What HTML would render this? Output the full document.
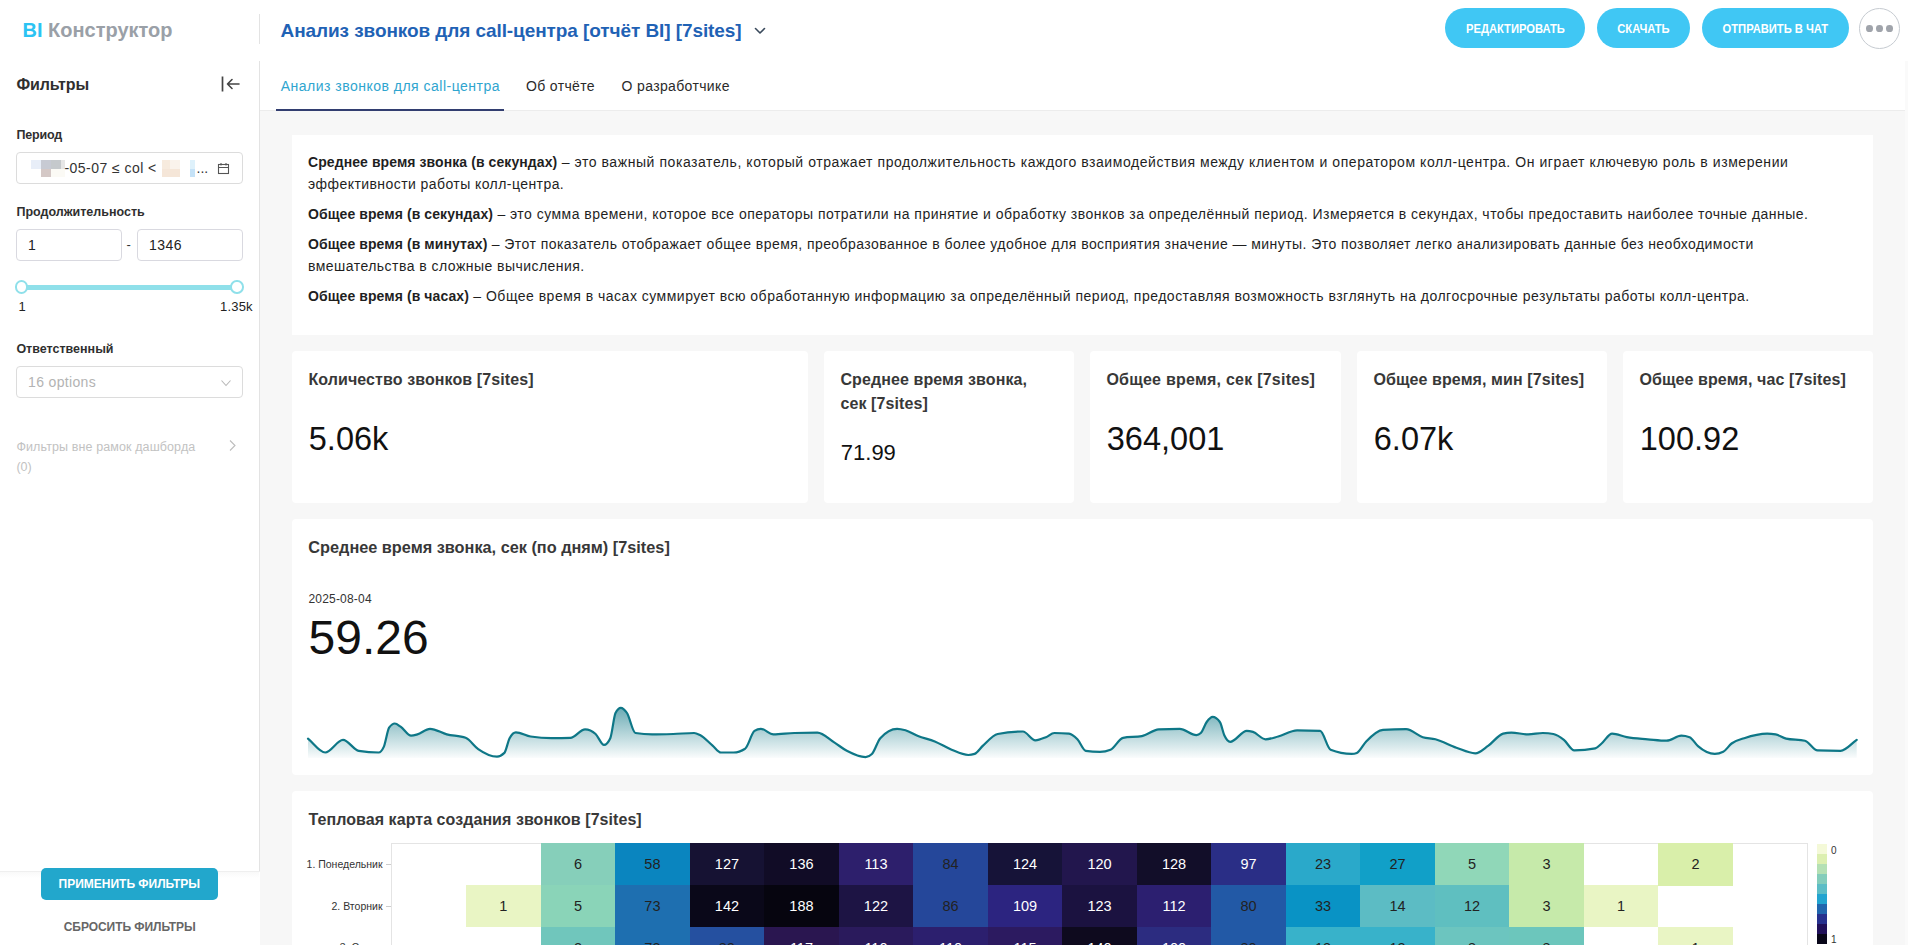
<!DOCTYPE html><html><head><meta charset="utf-8"><style>
*{box-sizing:border-box;margin:0;padding:0}
html,body{width:1908px;height:945px;overflow:hidden;background:#f7f7f7;font-family:"Liberation Sans",sans-serif;color:#222}
.abs{position:absolute}
.t{position:absolute;white-space:nowrap;line-height:1}
#hdr{position:absolute;left:0;top:0;width:1908px;height:61px;background:#fff}
#side{position:absolute;left:0;top:61px;width:260px;height:884px;background:#fff}
#tabs{position:absolute;left:260px;top:61px;width:1645px;height:50px;background:#fff;border-bottom:1px solid #ececec}
.card{position:absolute;background:#fff;border-radius:4px}
.btn{position:absolute;top:8px;height:40px;border-radius:20px;background:#40c7f4;color:#fff;font-weight:bold;font-size:12px;line-height:41.5px;text-align:center;letter-spacing:-0.6px}
.lbl{position:absolute;left:16px;font-size:12.5px;font-weight:bold;color:#303030;white-space:nowrap;line-height:1}
.inp{position:absolute;border:1px solid #d9d9e0;border-radius:4px;background:#fff}
.desc{position:absolute;left:308px;white-space:nowrap;font-size:14px;color:#1f1f1f;letter-spacing:0.52px;line-height:1}
.desc b{letter-spacing:0.08px}
.kt{position:absolute;font-size:16px;font-weight:bold;color:#383838;white-space:nowrap;line-height:1;letter-spacing:0.1px}
.kv{position:absolute;color:#111;white-space:nowrap;line-height:1}
.cell{position:absolute;width:75px;height:42px;line-height:42px;text-align:center;font-size:14.5px;color:#222;padding-top:1px}
.cell.w{color:#fff}
</style></head><body>
<div id="hdr">
<div class="t" style="left:22.5px;top:20.1px;font-size:20px;font-weight:bold;letter-spacing:0px"><span style="color:#2bc3f3">BI</span><span style="color:#9aa0a7"> Конструктор</span></div>
<div class="abs" style="left:259px;top:14px;width:1px;height:30px;background:#e3e3e3"></div>
<div class="t" style="left:280.5px;top:20.6px;font-size:19px;font-weight:bold;color:#1f62b5;letter-spacing:-0.08px">Анализ звонков для call-центра [отчёт BI] [7sites]</div>
<svg class="abs" style="left:753px;top:25.5px" width="14" height="10" viewBox="0 0 14 10"><path d="M2.5,2.5 L7,7 L11.5,2.5" fill="none" stroke="#3a4a5c" stroke-width="1.6" stroke-linecap="round" stroke-linejoin="round"/></svg>
<div class="btn" style="left:1445px;width:140px"><span style="display:inline-block;transform:scaleX(0.86);font-size:13px;letter-spacing:0">РЕДАКТИРОВАТЬ</span></div>
<div class="btn" style="left:1597px;width:93px"><span style="display:inline-block;transform:scaleX(0.86);font-size:13px;letter-spacing:0">СКАЧАТЬ</span></div>
<div class="btn" style="left:1702px;width:147px"><span style="display:inline-block;transform:scaleX(0.86);font-size:13px;letter-spacing:0">ОТПРАВИТЬ В ЧАТ</span></div>
<div class="abs" style="left:1859px;top:8px;width:41px;height:41px;border-radius:50%;border:1.2px solid #c6cbd1;background:#fff"></div>
<div class="abs" style="left:1866.15px;top:25.05px;width:6.7px;height:6.7px;border-radius:50%;background:#a0a4ab"></div>
<div class="abs" style="left:1876.15px;top:25.05px;width:6.7px;height:6.7px;border-radius:50%;background:#a0a4ab"></div>
<div class="abs" style="left:1886.15px;top:25.05px;width:6.7px;height:6.7px;border-radius:50%;background:#a0a4ab"></div>
</div>
<div id="side"></div>
<div class="abs" style="left:259px;top:61px;width:1px;height:811px;background:#e3e3e3"></div>
<div class="abs" style="left:0;top:871px;width:260px;height:1px;background:#efefef"></div>
<div class="abs" style="left:0;top:872px;width:259px;height:6px;background:linear-gradient(#f9f9f9,#fff)"></div>
<div class="t" style="left:16.4px;top:76.9px;font-size:16px;font-weight:bold;color:#2f2f2f;letter-spacing:-0.1px">Фильтры</div>
<svg class="abs" style="left:218px;top:74px" width="24" height="20" viewBox="0 0 24 20"><path d="M4.5,2.5 V17.5" stroke="#444" stroke-width="1.7" fill="none"/><path d="M21,10 H9.5 M14,5.5 L9.5,10 L14,14.5" stroke="#444" stroke-width="1.6" fill="none" stroke-linecap="round" stroke-linejoin="round"/></svg>
<div class="t" style="left:16.4px;top:129.4px;font-size:12.5px;font-weight:bold;color:#2f2f2f;letter-spacing:-0.15px">Период</div>
<div class="inp" style="left:16px;top:152px;width:227px;height:32px;border-color:#dcdcdc"></div>
<div class="abs" style="left:30.5px;top:160px;width:10px;height:9px;background:#e8eef8"></div>
<div class="abs" style="left:40.5px;top:160px;width:10px;height:9px;background:#c7cad3"></div>
<div class="abs" style="left:50.5px;top:160px;width:10px;height:9px;background:#c5c9cc"></div>
<div class="abs" style="left:60.5px;top:160px;width:4px;height:9px;background:#e6e6e6"></div>
<div class="abs" style="left:40.5px;top:169px;width:10px;height:8px;background:#d4c8c6"></div>
<div class="abs" style="left:50.5px;top:169px;width:14px;height:8px;background:#fbfaf5"></div>
<div class="abs" style="left:162px;top:160px;width:8px;height:9px;background:#f7ebde"></div>
<div class="abs" style="left:170px;top:160px;width:10px;height:9px;background:#faf3ec"></div>
<div class="abs" style="left:162px;top:169px;width:18px;height:8px;background:#f5e6d8"></div>
<div class="abs" style="left:190px;top:160px;width:5px;height:9px;background:#def1fb"></div>
<div class="abs" style="left:190px;top:169px;width:5px;height:8px;background:#c5e2f7"></div>
<div class="t" style="left:64.5px;top:161.4px;font-size:14px;color:#333;letter-spacing:0.45px">-05-07 ≤ col &lt;</div>
<div class="t" style="left:196.5px;top:161.4px;font-size:14px;color:#333">...</div>
<svg class="abs" style="left:216px;top:161px" width="15" height="15" viewBox="0 0 15 15"><rect x="2.5" y="3.5" width="10" height="9" fill="none" stroke="#555" stroke-width="1.1"/><path d="M2.5,6.5 H12.5 M5,2 V4.5 M10,2 V4.5" stroke="#555" stroke-width="1.1"/></svg>
<div class="t" style="left:16.4px;top:205.8px;font-size:12.5px;font-weight:bold;color:#2f2f2f">Продолжительность</div>
<div class="inp" style="left:16px;top:229px;width:106px;height:32px"></div>
<div class="inp" style="left:137px;top:229px;width:106px;height:32px"></div>
<div class="t" style="left:28px;top:238.0px;font-size:14px;color:#222">1</div>
<div class="t" style="left:126.5px;top:237.5px;font-size:13px;color:#333">-</div>
<div class="t" style="left:149px;top:238.0px;font-size:14px;color:#222;letter-spacing:0.5px">1346</div>
<div class="abs" style="left:22px;top:285px;width:215px;height:4.5px;background:#8fe0ea"></div>
<div class="abs" style="left:15.1px;top:280.3px;width:13.4px;height:13.4px;border-radius:50%;border:2.4px solid #8fe0ea;background:#fff"></div>
<div class="abs" style="left:230.4px;top:280.3px;width:13.4px;height:13.4px;border-radius:50%;border:2.4px solid #8fe0ea;background:#fff"></div>
<div class="t" style="left:18.5px;top:299.8px;font-size:13px;color:#222">1</div>
<div class="t" style="left:220px;top:299.8px;font-size:13px;color:#222;letter-spacing:0.2px">1.35k</div>
<div class="t" style="left:16.4px;top:342.7px;font-size:12.5px;font-weight:bold;color:#2f2f2f">Ответственный</div>
<div class="inp" style="left:16px;top:366px;width:227px;height:32px;border-color:#dcdcdc"></div>
<div class="t" style="left:28px;top:374.8px;font-size:14px;color:#b3b3b3;letter-spacing:0.35px">16 options</div>
<svg class="abs" style="left:219px;top:376px" width="14" height="14" viewBox="0 0 14 14"><path d="M2.5,4.5 L7,9.5 L11.5,4.5" fill="none" stroke="#b8b8b8" stroke-width="1.1"/></svg>
<div class="t" style="left:16.4px;top:440.6px;font-size:12.5px;color:#c2c2c2;letter-spacing:0.11px">Фильтры вне рамок дашборда</div>
<div class="t" style="left:16.4px;top:460.9px;font-size:12.5px;color:#c2c2c2">(0)</div>
<svg class="abs" style="left:226px;top:438px" width="14" height="14" viewBox="0 0 14 14"><path d="M4,2.5 L9,7.5 L4,12.5" fill="none" stroke="#bdbdbd" stroke-width="1.1"/></svg>
<div class="abs" style="left:41px;top:868px;width:177px;height:32px;border-radius:5px;background:#22a7cc"></div>
<div class="t" style="left:58.5px;top:878.0px;font-size:12px;font-weight:bold;color:#fff;letter-spacing:0.0px">ПРИМЕНИТЬ ФИЛЬТРЫ</div>
<div class="t" style="left:63.7px;top:920.8px;font-size:12px;font-weight:bold;color:#666;letter-spacing:-0.05px">СБРОСИТЬ ФИЛЬТРЫ</div>
<div id="tabs"></div>
<div class="t" style="left:280.7px;top:79.2px;font-size:14px;color:#2fa5cf;letter-spacing:0.49px">Анализ звонков для call-центра</div>
<div class="t" style="left:526px;top:79.2px;font-size:14px;color:#2a2a2a;letter-spacing:0.35px">Об отчёте</div>
<div class="t" style="left:621.5px;top:79.2px;font-size:14px;color:#2a2a2a;letter-spacing:0.36px">О разработчике</div>
<div class="abs" style="left:276px;top:109px;width:228px;height:2px;background:#323e70"></div>
<div class="card" style="left:292px;top:135px;width:1581px;height:200px;border-radius:0"></div>
<div class="desc" style="top:155.1px;letter-spacing:0.564px"><b>Среднее время звонка (в секундах)</b> – это важный показатель, который отражает продолжительность каждого взаимодействия между клиентом и оператором колл-центра. Он играет ключевую роль в измерении</div>
<div class="desc" style="top:177.1px;letter-spacing:0.429px">эффективности работы колл-центра.</div>
<div class="desc" style="top:206.6px;letter-spacing:0.474px"><b>Общее время (в секундах)</b> – это сумма времени, которое все операторы потратили на принятие и обработку звонков за определённый период. Измеряется в секундах, чтобы предоставить наиболее точные данные.</div>
<div class="desc" style="top:236.6px;letter-spacing:0.442px"><b>Общее время (в минутах)</b> – Этот показатель отображает общее время, преобразованное в более удобное для восприятия значение — минуты. Это позволяет легко анализировать данные без необходимости</div>
<div class="desc" style="top:258.6px;letter-spacing:0.463px">вмешательства в сложные вычисления.</div>
<div class="desc" style="top:288.6px;letter-spacing:0.493px"><b>Общее время (в часах)</b> – Общее время в часах суммирует всю обработанную информацию за определённый период, предоставляя возможность взглянуть на долгосрочные результаты работы колл-центра.</div>
<div class="card" style="left:292px;top:351px;width:516px;height:152.3px"></div>
<div class="kt" style="left:308.4px;top:371.5px">Количество звонков [7sites]</div>
<div class="kv" style="left:308.8px;top:422.5px;font-size:32.5px">5.06k</div>
<div class="card" style="left:824px;top:351px;width:250px;height:152.3px"></div>
<div class="kt" style="left:840.4px;top:371.5px">Среднее время звонка,</div>
<div class="kt" style="left:840.4px;top:396.2px">сек [7sites]</div>
<div class="kv" style="left:840.8px;top:441.6px;font-size:22px">71.99</div>
<div class="card" style="left:1090px;top:351px;width:251px;height:152.3px"></div>
<div class="kt" style="left:1106.4px;top:371.5px;letter-spacing:0.24px">Общее время, сек [7sites]</div>
<div class="kv" style="left:1106.8px;top:422.5px;font-size:32.5px">364,001</div>
<div class="card" style="left:1357px;top:351px;width:250px;height:152.3px"></div>
<div class="kt" style="left:1373.4px;top:371.5px">Общее время, мин [7sites]</div>
<div class="kv" style="left:1373.8px;top:422.5px;font-size:32.5px">6.07k</div>
<div class="card" style="left:1623px;top:351px;width:250px;height:152.3px"></div>
<div class="kt" style="left:1639.4px;top:371.5px">Общее время, час [7sites]</div>
<div class="kv" style="left:1639.8px;top:422.5px;font-size:32.5px">100.92</div>
<div class="card" style="left:292px;top:519px;width:1581px;height:256px"></div>
<div class="t" style="left:308.3px;top:539.2px;font-size:16.3px;font-weight:bold;color:#383838">Среднее время звонка, сек (по дням) [7sites]</div>
<div class="t" style="left:308.4px;top:592.8px;font-size:12px;color:#333;letter-spacing:0.2px">2025-08-04</div>
<div class="t" style="left:308.6px;top:614.1px;font-size:48px;color:#111">59.26</div>
<svg class="abs" style="left:0;top:0" width="1908" height="945" viewBox="0 0 1908 945"><defs><linearGradient id="g" x1="0" y1="705" x2="0" y2="758" gradientUnits="userSpaceOnUse"><stop offset="0" stop-color="#0f7786" stop-opacity="0.65"/><stop offset="1" stop-color="#0f7786" stop-opacity="0.02"/></linearGradient></defs><path d="M308.0,738.6 C313.7,743.2 319.5,752.5 325.2,752.5 C331.1,752.5 337.1,739.9 343.0,739.9 C348.2,739.9 353.5,749.9 358.7,750.8 C365.3,751.9 372.0,752.5 378.6,752.5 C380.4,752.5 382.1,750.5 383.9,746.6 C385.6,742.7 387.4,730.3 389.1,727.7 C391.0,724.9 392.9,723.5 394.8,723.5 C396.7,723.5 398.7,725.4 400.6,726.7 C404.1,729.0 407.6,735.7 411.1,735.7 C413.2,735.7 415.3,735.0 417.4,734.4 C421.6,733.2 425.8,728.8 430.0,728.8 C435.6,728.8 441.2,732.9 446.8,734.4 C453.1,736.0 459.3,735.5 465.6,737.8 C469.8,739.3 474.0,746.2 478.2,749.1 C484.5,753.5 490.7,756.7 497.0,756.7 C499.5,756.7 501.9,755.4 504.4,752.9 C506.1,751.1 507.9,741.4 509.6,738.2 C511.7,734.3 513.8,732.3 515.9,732.3 C520.8,732.3 525.7,735.7 530.6,736.5 C537.6,737.6 544.6,738.2 551.6,738.2 C557.9,738.2 564.1,738.1 570.4,737.8 C575.3,737.6 580.2,729.4 585.1,729.4 C588.6,729.4 592.1,730.9 595.6,734.0 C598.4,736.5 601.2,744.9 604.0,744.9 C606.1,744.9 608.2,742.7 610.3,738.2 C612.0,734.5 613.8,716.4 615.5,713.0 C617.3,709.5 619.0,707.8 620.8,707.8 C622.9,707.8 624.9,709.9 627.0,713.0 C629.8,717.2 632.6,732.5 635.4,733.0 C641.0,733.9 646.6,734.4 652.2,734.4 C659.2,734.4 666.2,734.2 673.2,734.0 C680.2,733.8 687.1,733.0 694.1,733.0 C696.1,733.0 698.0,734.1 700.0,735.1 C704.2,737.2 708.4,742.1 712.6,745.6 C715.4,747.9 718.2,752.5 721.0,752.5 C725.2,752.5 729.3,752.5 733.5,752.5 C737.4,752.5 741.2,751.2 745.1,748.7 C748.2,746.6 751.4,733.0 754.5,730.9 C756.6,729.5 758.7,728.8 760.8,728.8 C765.0,728.8 769.2,734.4 773.4,734.4 C780.4,734.4 787.3,733.2 794.3,733.0 C802.0,732.7 809.7,732.6 817.4,732.6 C823.0,732.6 828.6,738.9 834.2,742.4 C838.4,745.0 842.6,748.6 846.8,750.8 C853.1,754.1 859.3,757.1 865.6,757.1 C867.7,757.1 869.8,756.1 871.9,754.0 C874.7,751.2 877.5,741.3 880.3,738.2 C885.9,731.9 891.5,728.8 897.1,728.8 C899.9,728.8 902.7,729.5 905.5,730.3 C909.7,731.5 913.8,734.4 918.0,736.1 C923.6,738.3 929.2,739.1 934.8,741.4 C940.4,743.7 946.0,747.4 951.6,749.7 C957.2,752.0 962.7,755.0 968.3,755.0 C970.4,755.0 972.5,754.6 974.6,753.9 C977.4,752.9 980.2,748.2 983.0,745.6 C987.9,741.1 992.8,735.0 997.7,734.0 C1006.1,732.3 1014.5,731.5 1022.9,731.5 C1027.1,731.5 1031.2,740.3 1035.4,740.3 C1038.9,740.3 1042.4,738.6 1045.9,737.2 C1048.7,736.1 1051.5,733.0 1054.3,733.0 C1059.2,733.0 1064.1,733.2 1069.0,733.6 C1071.8,733.8 1074.6,736.4 1077.4,739.3 C1080.2,742.2 1082.9,750.4 1085.7,750.8 C1090.5,751.5 1095.2,751.8 1100.0,751.8 C1103.5,751.8 1107.0,751.1 1110.5,749.7 C1114.7,748.0 1118.9,738.6 1123.1,737.8 C1129.4,736.7 1135.6,737.2 1141.9,736.1 C1147.5,735.1 1153.1,729.7 1158.7,729.4 C1165.7,729.0 1172.7,728.8 1179.7,728.8 C1185.3,728.8 1190.8,735.1 1196.4,735.1 C1197.9,735.1 1199.3,734.4 1200.8,733.0 C1202.8,731.1 1204.7,724.7 1206.7,722.0 C1208.7,719.3 1210.6,716.9 1212.6,716.9 C1215.0,716.9 1217.5,718.6 1219.9,722.0 C1221.4,724.0 1222.8,732.0 1224.3,735.2 C1226.3,739.5 1228.2,741.8 1230.2,741.8 C1235.7,741.8 1241.3,730.9 1246.8,730.9 C1248.9,730.9 1250.9,731.3 1253.0,731.9 C1257.2,733.2 1261.4,739.3 1265.6,739.3 C1269.8,739.3 1274.0,737.6 1278.2,736.5 C1284.5,734.8 1290.8,730.3 1297.1,730.3 C1304.8,730.3 1312.4,730.5 1320.1,730.9 C1323.6,731.1 1327.1,748.3 1330.6,749.7 C1337.6,752.5 1344.6,753.9 1351.6,753.9 C1353.3,753.9 1355.1,753.6 1356.8,752.9 C1359.9,751.7 1363.1,744.6 1366.2,741.4 C1371.8,735.6 1377.4,730.1 1383.0,729.8 C1390.7,729.4 1398.4,729.2 1406.1,729.2 C1411.7,729.2 1417.2,735.5 1422.8,737.2 C1427.0,738.5 1431.2,738.2 1435.4,739.3 C1442.4,741.1 1449.4,745.3 1456.4,747.7 C1462.7,749.9 1469.0,753.3 1475.3,753.3 C1479.7,753.3 1484.0,748.6 1488.4,745.6 C1493.3,742.2 1498.2,734.8 1503.1,733.6 C1505.9,732.9 1508.6,732.6 1511.4,732.6 C1517.0,732.6 1522.6,734.4 1528.2,734.4 C1533.1,734.4 1538.0,733.0 1542.9,733.0 C1546.4,733.0 1549.9,733.3 1553.4,734.0 C1556.9,734.7 1560.4,737.1 1563.9,739.9 C1567.4,742.6 1570.8,750.4 1574.3,750.4 C1581.3,750.4 1588.3,749.7 1595.3,748.3 C1597.4,747.9 1599.5,745.2 1601.6,743.5 C1605.1,740.6 1608.6,733.6 1612.1,733.6 C1617.0,733.6 1621.9,736.3 1626.8,737.2 C1633.8,738.5 1640.7,738.7 1647.7,739.3 C1654.0,739.8 1660.3,740.7 1666.6,740.7 C1671.5,740.7 1676.4,735.7 1681.3,735.7 C1684.1,735.7 1686.8,736.2 1689.6,737.2 C1692.4,738.2 1695.2,743.8 1698.0,746.2 C1703.6,751.1 1709.2,753.9 1714.8,753.9 C1717.6,753.9 1720.4,753.2 1723.2,751.8 C1726.0,750.4 1728.8,745.6 1731.6,743.5 C1735.8,740.3 1740.0,739.6 1744.2,738.2 C1751.9,735.6 1759.5,733.6 1767.2,733.6 C1770.0,733.6 1772.8,733.9 1775.6,734.4 C1779.1,735.1 1782.6,737.8 1786.1,738.6 C1792.4,740.0 1798.6,739.3 1804.9,740.7 C1809.1,741.6 1813.3,750.3 1817.5,750.4 C1825.2,750.7 1832.9,750.8 1840.6,750.8 C1846.0,750.8 1851.3,743.5 1856.7,739.9 L1856.7,758 L308,758 Z" fill="url(#g)"/><path d="M308.0,738.6 C313.7,743.2 319.5,752.5 325.2,752.5 C331.1,752.5 337.1,739.9 343.0,739.9 C348.2,739.9 353.5,749.9 358.7,750.8 C365.3,751.9 372.0,752.5 378.6,752.5 C380.4,752.5 382.1,750.5 383.9,746.6 C385.6,742.7 387.4,730.3 389.1,727.7 C391.0,724.9 392.9,723.5 394.8,723.5 C396.7,723.5 398.7,725.4 400.6,726.7 C404.1,729.0 407.6,735.7 411.1,735.7 C413.2,735.7 415.3,735.0 417.4,734.4 C421.6,733.2 425.8,728.8 430.0,728.8 C435.6,728.8 441.2,732.9 446.8,734.4 C453.1,736.0 459.3,735.5 465.6,737.8 C469.8,739.3 474.0,746.2 478.2,749.1 C484.5,753.5 490.7,756.7 497.0,756.7 C499.5,756.7 501.9,755.4 504.4,752.9 C506.1,751.1 507.9,741.4 509.6,738.2 C511.7,734.3 513.8,732.3 515.9,732.3 C520.8,732.3 525.7,735.7 530.6,736.5 C537.6,737.6 544.6,738.2 551.6,738.2 C557.9,738.2 564.1,738.1 570.4,737.8 C575.3,737.6 580.2,729.4 585.1,729.4 C588.6,729.4 592.1,730.9 595.6,734.0 C598.4,736.5 601.2,744.9 604.0,744.9 C606.1,744.9 608.2,742.7 610.3,738.2 C612.0,734.5 613.8,716.4 615.5,713.0 C617.3,709.5 619.0,707.8 620.8,707.8 C622.9,707.8 624.9,709.9 627.0,713.0 C629.8,717.2 632.6,732.5 635.4,733.0 C641.0,733.9 646.6,734.4 652.2,734.4 C659.2,734.4 666.2,734.2 673.2,734.0 C680.2,733.8 687.1,733.0 694.1,733.0 C696.1,733.0 698.0,734.1 700.0,735.1 C704.2,737.2 708.4,742.1 712.6,745.6 C715.4,747.9 718.2,752.5 721.0,752.5 C725.2,752.5 729.3,752.5 733.5,752.5 C737.4,752.5 741.2,751.2 745.1,748.7 C748.2,746.6 751.4,733.0 754.5,730.9 C756.6,729.5 758.7,728.8 760.8,728.8 C765.0,728.8 769.2,734.4 773.4,734.4 C780.4,734.4 787.3,733.2 794.3,733.0 C802.0,732.7 809.7,732.6 817.4,732.6 C823.0,732.6 828.6,738.9 834.2,742.4 C838.4,745.0 842.6,748.6 846.8,750.8 C853.1,754.1 859.3,757.1 865.6,757.1 C867.7,757.1 869.8,756.1 871.9,754.0 C874.7,751.2 877.5,741.3 880.3,738.2 C885.9,731.9 891.5,728.8 897.1,728.8 C899.9,728.8 902.7,729.5 905.5,730.3 C909.7,731.5 913.8,734.4 918.0,736.1 C923.6,738.3 929.2,739.1 934.8,741.4 C940.4,743.7 946.0,747.4 951.6,749.7 C957.2,752.0 962.7,755.0 968.3,755.0 C970.4,755.0 972.5,754.6 974.6,753.9 C977.4,752.9 980.2,748.2 983.0,745.6 C987.9,741.1 992.8,735.0 997.7,734.0 C1006.1,732.3 1014.5,731.5 1022.9,731.5 C1027.1,731.5 1031.2,740.3 1035.4,740.3 C1038.9,740.3 1042.4,738.6 1045.9,737.2 C1048.7,736.1 1051.5,733.0 1054.3,733.0 C1059.2,733.0 1064.1,733.2 1069.0,733.6 C1071.8,733.8 1074.6,736.4 1077.4,739.3 C1080.2,742.2 1082.9,750.4 1085.7,750.8 C1090.5,751.5 1095.2,751.8 1100.0,751.8 C1103.5,751.8 1107.0,751.1 1110.5,749.7 C1114.7,748.0 1118.9,738.6 1123.1,737.8 C1129.4,736.7 1135.6,737.2 1141.9,736.1 C1147.5,735.1 1153.1,729.7 1158.7,729.4 C1165.7,729.0 1172.7,728.8 1179.7,728.8 C1185.3,728.8 1190.8,735.1 1196.4,735.1 C1197.9,735.1 1199.3,734.4 1200.8,733.0 C1202.8,731.1 1204.7,724.7 1206.7,722.0 C1208.7,719.3 1210.6,716.9 1212.6,716.9 C1215.0,716.9 1217.5,718.6 1219.9,722.0 C1221.4,724.0 1222.8,732.0 1224.3,735.2 C1226.3,739.5 1228.2,741.8 1230.2,741.8 C1235.7,741.8 1241.3,730.9 1246.8,730.9 C1248.9,730.9 1250.9,731.3 1253.0,731.9 C1257.2,733.2 1261.4,739.3 1265.6,739.3 C1269.8,739.3 1274.0,737.6 1278.2,736.5 C1284.5,734.8 1290.8,730.3 1297.1,730.3 C1304.8,730.3 1312.4,730.5 1320.1,730.9 C1323.6,731.1 1327.1,748.3 1330.6,749.7 C1337.6,752.5 1344.6,753.9 1351.6,753.9 C1353.3,753.9 1355.1,753.6 1356.8,752.9 C1359.9,751.7 1363.1,744.6 1366.2,741.4 C1371.8,735.6 1377.4,730.1 1383.0,729.8 C1390.7,729.4 1398.4,729.2 1406.1,729.2 C1411.7,729.2 1417.2,735.5 1422.8,737.2 C1427.0,738.5 1431.2,738.2 1435.4,739.3 C1442.4,741.1 1449.4,745.3 1456.4,747.7 C1462.7,749.9 1469.0,753.3 1475.3,753.3 C1479.7,753.3 1484.0,748.6 1488.4,745.6 C1493.3,742.2 1498.2,734.8 1503.1,733.6 C1505.9,732.9 1508.6,732.6 1511.4,732.6 C1517.0,732.6 1522.6,734.4 1528.2,734.4 C1533.1,734.4 1538.0,733.0 1542.9,733.0 C1546.4,733.0 1549.9,733.3 1553.4,734.0 C1556.9,734.7 1560.4,737.1 1563.9,739.9 C1567.4,742.6 1570.8,750.4 1574.3,750.4 C1581.3,750.4 1588.3,749.7 1595.3,748.3 C1597.4,747.9 1599.5,745.2 1601.6,743.5 C1605.1,740.6 1608.6,733.6 1612.1,733.6 C1617.0,733.6 1621.9,736.3 1626.8,737.2 C1633.8,738.5 1640.7,738.7 1647.7,739.3 C1654.0,739.8 1660.3,740.7 1666.6,740.7 C1671.5,740.7 1676.4,735.7 1681.3,735.7 C1684.1,735.7 1686.8,736.2 1689.6,737.2 C1692.4,738.2 1695.2,743.8 1698.0,746.2 C1703.6,751.1 1709.2,753.9 1714.8,753.9 C1717.6,753.9 1720.4,753.2 1723.2,751.8 C1726.0,750.4 1728.8,745.6 1731.6,743.5 C1735.8,740.3 1740.0,739.6 1744.2,738.2 C1751.9,735.6 1759.5,733.6 1767.2,733.6 C1770.0,733.6 1772.8,733.9 1775.6,734.4 C1779.1,735.1 1782.6,737.8 1786.1,738.6 C1792.4,740.0 1798.6,739.3 1804.9,740.7 C1809.1,741.6 1813.3,750.3 1817.5,750.4 C1825.2,750.7 1832.9,750.8 1840.6,750.8 C1846.0,750.8 1851.3,743.5 1856.7,739.9" fill="none" stroke="#0e7787" stroke-width="2.2" stroke-linejoin="round" stroke-linecap="round"/></svg>
<div class="card" style="left:292px;top:791px;width:1581px;height:200px"></div>
<div class="t" style="left:308.5px;top:812.1px;font-size:16px;font-weight:bold;color:#383838;letter-spacing:0.06px">Тепловая карта создания звонков [7sites]</div>
<div class="abs" style="left:391px;top:842.5px;width:1416.5px;height:110px;border:1px solid #e4e4e4;border-bottom:none"></div>
<div class="cell" style="left:540.52px;top:843.40px;width:74.81px;height:42.15px;line-height:41.9px;background:#86cfba">6</div>
<div class="cell" style="left:615.03px;top:843.40px;width:74.81px;height:42.15px;line-height:41.9px;background:#0a85bf">58</div>
<div class="cell w" style="left:689.54px;top:843.40px;width:74.81px;height:42.15px;line-height:41.9px;background:#161233">127</div>
<div class="cell w" style="left:764.05px;top:843.40px;width:74.81px;height:42.15px;line-height:41.9px;background:#110c26">136</div>
<div class="cell w" style="left:838.56px;top:843.40px;width:74.81px;height:42.15px;line-height:41.9px;background:#2d1f6c">113</div>
<div class="cell" style="left:913.07px;top:843.40px;width:74.81px;height:42.15px;line-height:41.9px;background:#25479a">84</div>
<div class="cell w" style="left:987.58px;top:843.40px;width:74.81px;height:42.15px;line-height:41.9px;background:#161338">124</div>
<div class="cell w" style="left:1062.09px;top:843.40px;width:74.81px;height:42.15px;line-height:41.9px;background:#22164d">120</div>
<div class="cell w" style="left:1136.60px;top:843.40px;width:74.81px;height:42.15px;line-height:41.9px;background:#120e29">128</div>
<div class="cell w" style="left:1211.11px;top:843.40px;width:74.81px;height:42.15px;line-height:41.9px;background:#2a2e86">97</div>
<div class="cell" style="left:1285.62px;top:843.40px;width:74.81px;height:42.15px;line-height:41.9px;background:#2aa9ca">23</div>
<div class="cell" style="left:1360.13px;top:843.40px;width:74.81px;height:42.15px;line-height:41.9px;background:#11a0c8">27</div>
<div class="cell" style="left:1434.64px;top:843.40px;width:74.81px;height:42.15px;line-height:41.9px;background:#90d7b8">5</div>
<div class="cell" style="left:1509.15px;top:843.40px;width:74.81px;height:42.15px;line-height:41.9px;background:#c6eaaa">3</div>
<div class="cell" style="left:1658.17px;top:843.40px;width:74.81px;height:42.15px;line-height:41.9px;background:#d9efaa">2</div>
<div class="cell" style="left:466.01px;top:885.25px;width:74.81px;height:42.15px;line-height:41.9px;background:#e9f5c4">1</div>
<div class="cell" style="left:540.52px;top:885.25px;width:74.81px;height:42.15px;line-height:41.9px;background:#8ad4b8">5</div>
<div class="cell" style="left:615.03px;top:885.25px;width:74.81px;height:42.15px;line-height:41.9px;background:#1e6fb0">73</div>
<div class="cell w" style="left:689.54px;top:885.25px;width:74.81px;height:42.15px;line-height:41.9px;background:#0a0819">142</div>
<div class="cell w" style="left:764.05px;top:885.25px;width:74.81px;height:42.15px;line-height:41.9px;background:#06050f">188</div>
<div class="cell w" style="left:838.56px;top:885.25px;width:74.81px;height:42.15px;line-height:41.9px;background:#1d1444">122</div>
<div class="cell" style="left:913.07px;top:885.25px;width:74.81px;height:42.15px;line-height:41.9px;background:#25479a">86</div>
<div class="cell w" style="left:987.58px;top:885.25px;width:74.81px;height:42.15px;line-height:41.9px;background:#2c2480">109</div>
<div class="cell w" style="left:1062.09px;top:885.25px;width:74.81px;height:42.15px;line-height:41.9px;background:#1b1240">123</div>
<div class="cell w" style="left:1136.60px;top:885.25px;width:74.81px;height:42.15px;line-height:41.9px;background:#2c1f70">112</div>
<div class="cell" style="left:1211.11px;top:885.25px;width:74.81px;height:42.15px;line-height:41.9px;background:#2259a6">80</div>
<div class="cell" style="left:1285.62px;top:885.25px;width:74.81px;height:42.15px;line-height:41.9px;background:#0993c5">33</div>
<div class="cell" style="left:1360.13px;top:885.25px;width:74.81px;height:42.15px;line-height:41.9px;background:#5cbcc4">14</div>
<div class="cell" style="left:1434.64px;top:885.25px;width:74.81px;height:42.15px;line-height:41.9px;background:#5fbfc0">12</div>
<div class="cell" style="left:1509.15px;top:885.25px;width:74.81px;height:42.15px;line-height:41.9px;background:#c6eaaa">3</div>
<div class="cell" style="left:1583.66px;top:885.25px;width:74.81px;height:42.15px;line-height:41.9px;background:#e9f5c4">1</div>
<div class="cell" style="left:540.52px;top:927.10px;width:74.81px;height:42.15px;line-height:41.9px;background:#70c6bc">2</div>
<div class="cell" style="left:615.03px;top:927.10px;width:74.81px;height:42.15px;line-height:41.9px;background:#1e6fb0">73</div>
<div class="cell" style="left:689.54px;top:927.10px;width:74.81px;height:42.15px;line-height:41.9px;background:#2550a0">89</div>
<div class="cell w" style="left:764.05px;top:927.10px;width:74.81px;height:42.15px;line-height:41.9px;background:#2a1650">117</div>
<div class="cell w" style="left:838.56px;top:927.10px;width:74.81px;height:42.15px;line-height:41.9px;background:#2a1a5c">110</div>
<div class="cell w" style="left:913.07px;top:927.10px;width:74.81px;height:42.15px;line-height:41.9px;background:#2c1f6e">110</div>
<div class="cell w" style="left:987.58px;top:927.10px;width:74.81px;height:42.15px;line-height:41.9px;background:#2c1a60">115</div>
<div class="cell w" style="left:1062.09px;top:927.10px;width:74.81px;height:42.15px;line-height:41.9px;background:#0e0a1e">140</div>
<div class="cell w" style="left:1136.60px;top:927.10px;width:74.81px;height:42.15px;line-height:41.9px;background:#2c2c80">100</div>
<div class="cell" style="left:1211.11px;top:927.10px;width:74.81px;height:42.15px;line-height:41.9px;background:#2259a6">80</div>
<div class="cell" style="left:1285.62px;top:927.10px;width:74.81px;height:42.15px;line-height:41.9px;background:#38b2ca">13</div>
<div class="cell" style="left:1360.13px;top:927.10px;width:74.81px;height:42.15px;line-height:41.9px;background:#38b2ca">12</div>
<div class="cell" style="left:1434.64px;top:927.10px;width:74.81px;height:42.15px;line-height:41.9px;background:#6cc5bf">8</div>
<div class="cell" style="left:1509.15px;top:927.10px;width:74.81px;height:42.15px;line-height:41.9px;background:#6cc6bc">8</div>
<div class="cell" style="left:1658.17px;top:927.10px;width:74.81px;height:42.15px;line-height:41.9px;background:#e9f5c4">1</div>
<div class="t" style="left:0;width:382.5px;text-align:right;top:858.7px;font-size:10.5px;color:#333">1. Понедельник</div>
<div class="abs" style="left:386px;top:863.8px;width:5px;height:1px;background:#ccc"></div>
<div class="t" style="left:0;width:382.5px;text-align:right;top:900.6px;font-size:10.5px;color:#333">2. Вторник</div>
<div class="abs" style="left:386px;top:905.7px;width:5px;height:1px;background:#ccc"></div>
<div class="t" style="left:0;width:382.5px;text-align:right;top:942.4px;font-size:10.5px;color:#333">3. Среда</div>
<div class="abs" style="left:386px;top:947.5px;width:5px;height:1px;background:#ccc"></div>
<div class="abs" style="left:1817px;top:843.5px;width:10px;height:10.2px;background:#f4f9d8"></div>
<div class="abs" style="left:1817px;top:853.5px;width:10px;height:10.2px;background:#dcefb0"></div>
<div class="abs" style="left:1817px;top:863.5px;width:10px;height:10.2px;background:#b4e0b4"></div>
<div class="abs" style="left:1817px;top:873.5px;width:10px;height:10.2px;background:#84cdbb"></div>
<div class="abs" style="left:1817px;top:883.5px;width:10px;height:10.2px;background:#5cbdc6"></div>
<div class="abs" style="left:1817px;top:893.5px;width:10px;height:10.2px;background:#22a4d0"></div>
<div class="abs" style="left:1817px;top:903.5px;width:10px;height:10.2px;background:#2166ae"></div>
<div class="abs" style="left:1817px;top:913.5px;width:10px;height:10.2px;background:#27318e"></div>
<div class="abs" style="left:1817px;top:923.5px;width:10px;height:10.2px;background:#21115a"></div>
<div class="abs" style="left:1817px;top:933.5px;width:10px;height:10.2px;background:#090719"></div>
<div class="t" style="left:1831px;top:845.5px;font-size:10px;color:#333">0</div>
<div class="t" style="left:1831px;top:934.5px;font-size:10px;color:#333">1</div>
<div class="abs" style="left:1905px;top:61px;width:3px;height:884px;background:#fafafa"></div>
</body></html>
